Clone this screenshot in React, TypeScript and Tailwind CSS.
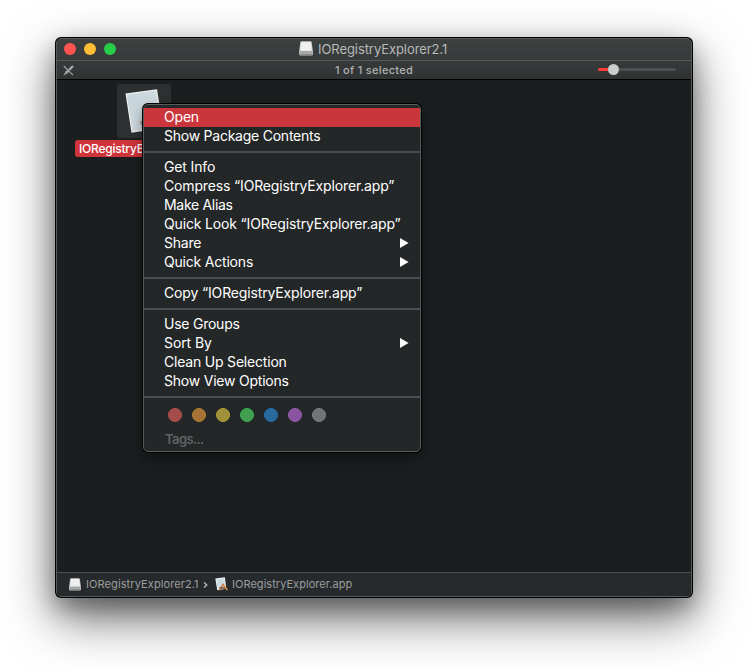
import React from "react";

function Drive({ className }: { className: string }) {
  return (
    <svg className={className} viewBox="0 0 14 15">
      <path d="M1.3 1.4Q1.5 0.2 2.6 0.2H11.4Q12.5 0.2 12.7 1.4L13.9 10.4V13Q13.9 14.6 12.4 14.6H1.6Q0.1 14.6 0.1 13V10.4Z" fill="#d0d1d1" />
      <path d="M2.3 1.2H11.7L12.6 9.8H1.4Z" fill="#f0f0f0" />
      <path d="M0.3 10.8H13.7V12.8Q13.7 13.9 12.4 13.9H1.6Q0.3 13.9 0.3 12.8Z" fill="#a9abab" />
      <path d="M1 10.6H13" stroke="#858787" strokeWidth="0.6" />
      <path d="M1 13.9H13" stroke="#6c6e6e" strokeWidth="0.9" />
    </svg>
  );
}

function MiniApp() {
  return (
    <svg className="h-[14px] w-[13px] shrink-0" viewBox="0 0 13 14">
      <path d="M0.3 1.6L9.8 0.3L11.4 11.8L2.3 13.3Z" fill="#f4f6f6" />
      <path d="M1.3 2.5L9 1.3L10.4 11L3 12.2Z" fill="#ccdbe2" />
      <path d="M4.6 13L8 7.4L12.2 13" fill="none" stroke="#c98048" strokeWidth="1.5" />
      <path d="M4.6 11H12.4" stroke="#7b4630" strokeWidth="1.4" />
      <path d="M9.5 9.5L12.5 12.8" stroke="#f0b04c" strokeWidth="1" />
    </svg>
  );
}

type Item = { label: string; arrow?: boolean; selected?: boolean; track: string };

const groups: Item[][] = [
  [
    { label: "Open", selected: true, track: "tracking-[-0.2px]" },
    { label: "Show Package Contents", track: "tracking-[-0.24px]" },
  ],
  [
    { label: "Get Info", track: "tracking-[-0.14px]" },
    { label: "Compress “IORegistryExplorer.app”", track: "tracking-[-0.15px]" },
    { label: "Make Alias", track: "tracking-[-0.3px]" },
    { label: "Quick Look “IORegistryExplorer.app”", track: "tracking-[-0.16px]" },
    { label: "Share", arrow: true, track: "tracking-[-0.2px]" },
    { label: "Quick Actions", arrow: true, track: "tracking-[-0.2px]" },
  ],
  [{ label: "Copy “IORegistryExplorer.app”", track: "tracking-[-0.15px]" }],
  [
    { label: "Use Groups", track: "tracking-[-0.24px]" },
    { label: "Sort By", arrow: true, track: "tracking-[-0.1px]" },
    { label: "Clean Up Selection", track: "tracking-[-0.2px]" },
    { label: "Show View Options", track: "tracking-[-0.22px]" },
  ],
];

const tags = [
  "bg-[#a34c49] border-[#b5504c]",
  "bg-[#a37436] border-[#b9802f]",
  "bg-[#a0913a] border-[#b3a237]",
  "bg-[#429e51] border-[#38b54f]",
  "bg-[#2a6a9f] border-[#2072b5]",
  "bg-[#8955a0] border-[#9a5ab8]",
  "bg-[#727375] border-[#808183]",
];

function ContextMenu() {
  return (
    <div className="absolute left-[142px] top-[103px] h-[350px] w-[280px] rounded-[6px] bg-black p-px shadow-[0_6px_14px_rgba(0,0,0,0.4)]">
      <div className="flex h-full flex-col overflow-hidden rounded-[5px] border border-[#595c5d] bg-[#242728] pt-[3px]">
        {groups.map((items, g) => (
          <React.Fragment key={g}>
            <div className="flex flex-col">
              {items.map((item) => (
                <div
                  key={item.label}
                  className={`flex h-[19px] items-center justify-between pl-[20px] pr-[11px] text-[14px] leading-[17px] text-white ${item.selected ? "bg-[#cb353c]" : ""}`}
                >
                  <span className={`h-[19px] whitespace-nowrap ${item.track}`}>{item.label}</span>
                  {item.arrow && (
                    <svg className="mb-px h-[10px] w-[9px]" viewBox="0 0 9 10">
                      <path d="M0 0L8.6 5L0 10Z" fill="white" />
                    </svg>
                  )}
                </div>
              ))}
            </div>
            <div className="mb-[5px] mt-[5px] h-[2px] shrink-0 bg-[#4b4e50]" />
          </React.Fragment>
        ))}
        <div className="flex gap-[10px] pl-[24px] pt-[5px]">
          {tags.map((c) => (
            <span key={c} className={`h-[14px] w-[14px] rounded-full border ${c}`} />
          ))}
        </div>
        <div className="pl-[21px] pt-[8px] text-[13px] font-semibold leading-[18px] tracking-[-0.6px] text-[#606364]">Tags...</div>
      </div>
    </div>
  );
}

export default function App() {
  return (
    <div className="relative h-[671px] w-[748px] overflow-hidden bg-white pl-[55px] pt-[37px] font-['Inter','Liberation_Sans',sans-serif]">
      <div className="h-[561px] w-[638px] rounded-[6px] bg-black p-px shadow-[0_20px_50px_rgba(0,0,0,0.58),0_10px_22px_rgba(0,0,0,0.28)]">
        <div className="flex h-full flex-col overflow-hidden rounded-[5px] border border-[#56595a] bg-[#1b1e1f]">
          <div className="flex h-[22px] shrink-0 items-center border-b border-[#565858] bg-linear-to-b from-[#3c403f] to-[#373a3b]">
            <div className="flex w-[242px] gap-[8px] pl-[7px] pb-px">
              <span className="h-[12px] w-[12px] rounded-full bg-[#ff5450]" />
              <span className="h-[12px] w-[12px] rounded-full bg-[#ffbe33]" />
              <span className="h-[12px] w-[12px] rounded-full bg-[#27cc48]" />
            </div>
            <Drive className="mb-[2px] h-[15px] w-[14px] shrink-0" />
            <span className="mb-px ml-[5px] whitespace-nowrap text-[13px] leading-[20px] tracking-[-0.07px] text-[#b6b8b8]">IORegistryExplorer2.1</span>
          </div>
          <div className="flex h-[19px] shrink-0 items-center border-b border-black bg-linear-to-b from-[#373a3b] to-[#303334]">
            <svg className="ml-[6px] h-[11px] w-[11px]" viewBox="0 0 11 11" fill="none">
              <path d="M0.8 1L10 10.2" stroke="#a4a6a6" strokeWidth="1.1" />
              <path d="M10 1L3.4 7.6" stroke="#a6a9a9" strokeWidth="2.3" />
              <path d="M3 5.8L0.4 10.6L5.2 8Z" fill="#9da0a0" />
              <path d="M3.4 2.2L9.4 8.2" stroke="#343738" strokeWidth="0.5" />
            </svg>
            <span className="ml-[261px] w-[80px] whitespace-nowrap text-[11px] font-medium leading-[18px] tracking-[0.3px] text-[#b0b2b2]">1 of 1 selected</span>
            <div className="mb-[2px] ml-[183px] flex items-center">
              <span className="h-[3px] w-[10px] rounded-l-full bg-[#fb3d34]" />
              <span className="h-[11px] w-[11px] rounded-full bg-[#cbcccc]" />
              <span className="h-[3px] w-[57px] rounded-r-full bg-[#4e5051]" />
            </div>
          </div>
          <div className="flex min-h-0 flex-1 flex-col pl-[18px] pt-[4px]">
            <div className="ml-[42px] h-[54px] w-[54px] rounded-[3px] bg-[#2d3031]">
              <svg className="h-[54px] w-[54px]" viewBox="0 0 54 54">
                <defs>
                  <linearGradient id="paper" x1="0" y1="0" x2="1" y2="1">
                    <stop stopColor="#c6d4da" />
                    <stop offset="1" stopColor="#d6e2e7" />
                  </linearGradient>
                </defs>
                <path d="M8.5 9.5L40 5.2L46 44L14.5 48.8Z" fill="#f0f2f2" />
                <path d="M9.8 10.8L39 6.6L44.5 43L15.5 47.2Z" fill="url(#paper)" />
                <path d="M23 37H36V41H24Z" fill="#b4966c" />
              </svg>
            </div>
            <div className="mt-[2px] h-[17px] w-[136px] whitespace-nowrap rounded-[3px] bg-[#cf343b] pl-[4px] text-[12px] font-medium leading-[17px] tracking-[-0.22px] text-white">
              IORegistryExplorer.app
            </div>
          </div>
          <div className="flex h-[24px] shrink-0 items-center border-t border-[#4c4f50] bg-[#272a2c] pl-[12px] text-[11px] text-[#9b9d9e]">
            <Drive className="mb-px h-[13px] w-[12px] shrink-0" />
            <span className="ml-[5px] w-[113px] whitespace-nowrap tracking-[0.1px]">IORegistryExplorer2.1</span>
            <svg className="ml-[4px] h-[6px] w-[5px]" viewBox="0 0 5 6" fill="none">
              <path d="M1 0.5L3.8 3L1 5.5" stroke="#b8baba" strokeWidth="1.3" />
            </svg>
            <span className="mb-[2px] ml-[7px] flex">
              <MiniApp />
            </span>
            <span className="ml-[4px] whitespace-nowrap tracking-[0.04px]">IORegistryExplorer.app</span>
          </div>
        </div>
      </div>
      <ContextMenu />
    </div>
  );
}
